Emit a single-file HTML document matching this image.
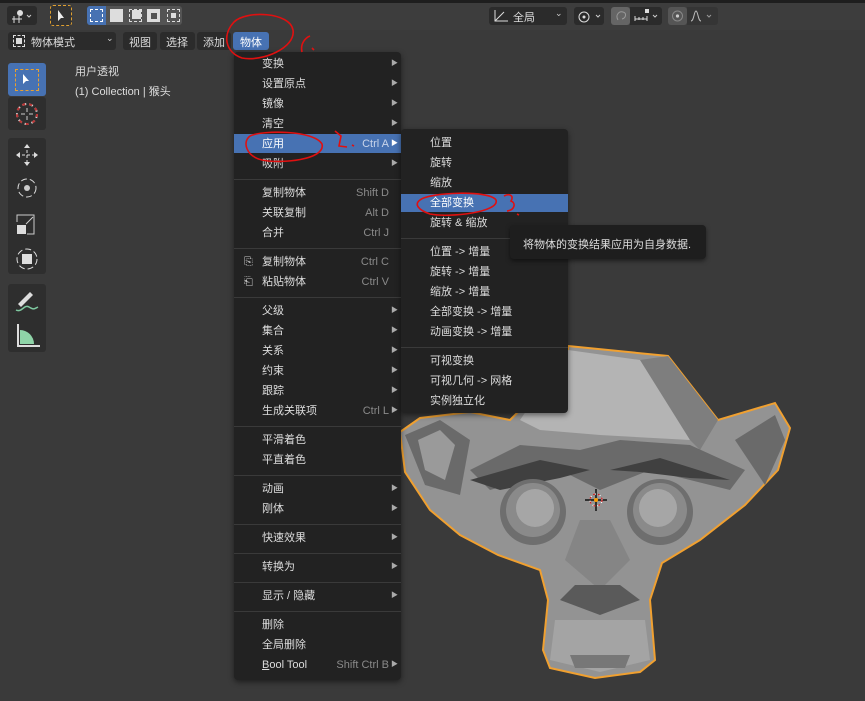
<!DOCTYPE html>
<html><head><meta charset="utf-8"><style>
*{margin:0;padding:0;box-sizing:border-box}
body{width:865px;height:701px;overflow:hidden;background:#3a3a3a;font-family:"Liberation Sans","Noto Sans CJK SC",sans-serif;font-size:11px;color:#dcdcdc;position:relative}
.abs{position:absolute}
.btn{position:absolute;background:#2b2b2b;border-radius:3px}
.menu{position:absolute;background:#222;border-radius:4px;box-shadow:0 2px 6px rgba(0,0,0,.5)}
.it{position:absolute;left:0;right:0;height:20px;line-height:20px}
.it .t{position:absolute}
.it .s{position:absolute;color:#8a8a8a}
.it .a{position:absolute;font-size:7px;color:#aaa}
.hl{background:#4772b3;color:#fff}
.sep{position:absolute;left:0;right:0;height:1px;background:#3a3a3a}
.tb{position:absolute;left:8px;width:38px;background:#2e2e2e;border-radius:3px}
</style></head><body>
<div class="abs" style="left:0;top:0;width:865px;height:3px;background:#1e1e1e"></div>
<div class="abs" style="left:0;top:3px;width:865px;height:27px;background:#3d3d3d"></div>
<div class="btn" style="left:7px;top:6px;width:30px;height:19px"></div>
<svg class="abs" style="left:10px;top:8px" width="26" height="16"><path d="M2 11h10M4 8v7M9 8v7" stroke="#ddd" fill="none"/><circle cx="10" cy="5" r="3" fill="#ddd"/><path d="M17 7l2 2 2-2" stroke="#ccc" fill="none"/></svg>
<div class="btn" style="left:50px;top:5px;width:22px;height:21px;border:1px dashed #e0a030;background:#333"></div>
<svg class="abs" style="left:56px;top:9px" width="12" height="14"><path d="M2 1v11l3-3 3 0z" fill="#eee"/></svg>
<div class="btn" style="left:87px;top:6px;width:95px;height:19px;background:#545454"></div>
<div class="abs" style="left:87px;top:6px;width:19px;height:19px;background:#4772b3;border-radius:3px 0 0 3px"></div>
<div class="abs" style="left:90px;top:9px;width:13px;height:13px;border:1px dashed #fff"></div>
<div class="abs" style="left:110px;top:9px;width:13px;height:13px;background:#ddd"></div>
<div class="abs" style="left:129px;top:9px;width:13px;height:13px;border:1px dashed #ddd;background:linear-gradient(#ddd,#ddd) 2px 0/9px 9px no-repeat"></div>
<div class="abs" style="left:147px;top:9px;width:13px;height:13px;background:#ddd"></div>
<div class="abs" style="left:151px;top:13px;width:6px;height:6px;background:#545454"></div>
<div class="abs" style="left:167px;top:9px;width:13px;height:13px;border:1px dashed #ddd"></div>
<div class="abs" style="left:171px;top:13px;width:5px;height:5px;background:#ddd"></div>

<div class="btn" style="left:489px;top:7px;width:78px;height:18px"></div>
<svg class="abs" style="left:492px;top:8px" width="20" height="16"><path d="M3 2v11h13M3 13l9-9" stroke="#ddd" fill="none"/></svg>
<div class="abs" style="left:513px;top:9px;color:#ddd">全局</div>
<div class="abs" style="left:555px;top:8px;color:#ccc;font-size:9px">⌄</div>
<div class="btn" style="left:574px;top:7px;width:30px;height:18px"></div>
<svg class="abs" style="left:576px;top:8px" width="28" height="16"><circle cx="8" cy="9" r="5" stroke="#ddd" fill="none"/><circle cx="8" cy="9" r="1.5" fill="#ddd"/><path d="M20 7l2 2 2-2" stroke="#ccc" fill="none"/></svg>
<div class="btn" style="left:611px;top:7px;width:19px;height:18px;background:#656565"></div>
<div class="btn" style="left:630px;top:7px;width:32px;height:18px;border-radius:0 3px 3px 0"></div>
<svg class="abs" style="left:613px;top:8px" width="48" height="16"><path d="M5 12c-3-5 1-9 5-8s3 6-1 7" stroke="#999" fill="none"/><path d="M22 11h12M22 8v5M26 9v3M30 9v3M34 8v5" stroke="#ddd" fill="none"/><rect x="32" y="1" width="4" height="4" fill="#ddd"/><path d="M40 7l2 2 2-2" stroke="#ccc" fill="none"/></svg>
<div class="btn" style="left:668px;top:7px;width:19px;height:18px;background:#555"></div>
<div class="btn" style="left:687px;top:7px;width:31px;height:18px;border-radius:0 3px 3px 0;background:#353535"></div>
<svg class="abs" style="left:669px;top:8px" width="48" height="16"><circle cx="8.5" cy="8" r="5" stroke="#888" fill="none"/><circle cx="8.5" cy="8" r="1.6" fill="#ccc"/><path d="M22 13c3 0 3-10 5-10s2 10 5 10" stroke="#bbb" fill="none"/><path d="M38 7l2 2 2-2" stroke="#999" fill="none"/></svg>

<div class="btn" style="left:8px;top:32px;width:108px;height:18px"></div>
<div class="abs" style="left:13px;top:35px;width:12px;height:12px;border:1px dashed #ddd"></div>
<div class="abs" style="left:16px;top:38px;width:6px;height:6px;background:#ddd"></div>
<div class="abs" style="left:31px;top:34px;color:#ddd">物体模式</div>
<div class="abs" style="left:106px;top:33px;color:#ccc;font-size:9px">⌄</div>
<div class="btn" style="left:123px;top:32px;width:34px;height:18px"></div><div class="abs" style="left:129px;top:34px">视图</div>
<div class="btn" style="left:160px;top:32px;width:35px;height:18px"></div><div class="abs" style="left:166px;top:34px">选择</div>
<div class="btn" style="left:197px;top:32px;width:34px;height:18px"></div><div class="abs" style="left:203px;top:34px">添加</div>
<div class="btn" style="left:233px;top:32px;width:36px;height:18px;background:#4772b3"></div><div class="abs" style="left:240px;top:34px;color:#fff">物体</div>

<div class="abs" style="left:75px;top:63px">用户透视</div>
<div class="abs" style="left:75px;top:83px">(1) Collection | 猴头</div>

<div class="tb" style="top:63px;height:33px;background:#4772b3"></div>
<div class="abs" style="left:15px;top:69px;width:24px;height:22px;border:1px dashed #e8a030"></div>
<svg class="abs" style="left:21px;top:73px" width="12" height="14"><path d="M2 1v10l3-3 3 0z" fill="#fff"/></svg>
<div class="tb" style="top:97px;height:33px"></div>
<svg class="abs" style="left:13px;top:101px" width="28" height="26"><circle cx="14" cy="13" r="10" stroke="#ddd" stroke-width="2" stroke-dasharray="4 3" fill="none"/><circle cx="14" cy="13" r="10" stroke="#b33" stroke-width="2" stroke-dasharray="3 4" fill="none"/><path d="M14 7v4M14 15v4M8 13h4M16 13h4" stroke="#ccc"/></svg>
<div class="tb" style="top:138px;height:136px"></div>
<svg class="abs" style="left:12px;top:142px" width="30" height="128"><path d="M15 3v20M5 13h20" stroke="#ddd" stroke-dasharray="3 2"/><path d="M15 2l-3 4h6zM15 24l-3-4h6zM4 13l4-3v6zM26 13l-4-3v6z" fill="#ddd"/><circle cx="15" cy="46" r="9" stroke="#ddd" fill="none" stroke-dasharray="6 3"/><circle cx="15" cy="46" r="3" fill="#ccc"/><rect x="5" y="83" width="9" height="9" fill="#ddd"/><path d="M5 80v-7h17v19h-7M14 82l7-7" stroke="#ccc" fill="none"/><circle cx="15" cy="117" r="10" stroke="#ddd" fill="none" stroke-dasharray="6 3"/><rect x="10" y="112" width="10" height="10" fill="#ddd"/></svg>
<div class="tb" style="top:284px;height:68px"></div>
<svg class="abs" style="left:12px;top:288px" width="30" height="62"><path d="M6 16l12-12 3 3-12 12z" fill="#ddd"/><path d="M4 22c6 3 8-6 13-3s5 2 9 0" stroke="#7ec8a0" fill="none" stroke-width="1.5"/><path d="M6 36v22h22" stroke="#ddd" fill="none" stroke-width="2"/><path d="M8 56v-14a14 14 0 0 1 14 14z" fill="#8fd4a8"/></svg>

<svg class="abs" style="left:0;top:0" width="865" height="701">
<path d="M568 346L668 356L718 420L775 403L790 428L778 470L745 505L700 540L662 563L650 600L655 660L640 672L595 678L550 668L543 650L548 600L540 570L498 555L460 535L430 510L405 472L400 432L420 418L470 412L510 420L540 390L568 380Z" fill="#939393" stroke="#f0a030" stroke-width="2"/>
<path d="M568 350L640 360L680 400L690 440L600 435L540 430L520 420Z" fill="#b4b4b4"/>
<path d="M640 360L668 356L718 420L700 450L690 440Z" fill="#7e7e7e"/>
<path d="M470 470L520 445L580 450L620 440L690 445L745 470L730 490L650 470L600 490L560 470L490 490Z" fill="#6a6a6a"/>
<path d="M470 480L540 460L590 470L560 478L500 490Z" fill="#404040"/>
<path d="M610 470L660 458L730 480L690 478L640 472Z" fill="#404040"/>
<path d="M405 435L440 420L470 440L460 495L425 485Z" fill="#6a6a6a"/>
<path d="M418 440L440 430L455 445L445 480L425 470Z" fill="#9a9a9a"/>
<path d="M735 440L775 415L785 440L765 485Z" fill="#6a6a6a"/>
<circle cx="533" cy="512" r="33" fill="#6e6e6e"/><circle cx="533" cy="510" r="27" fill="#8a8a8a"/><circle cx="535" cy="508" r="19" fill="#a6a6a6"/>
<circle cx="660" cy="512" r="33" fill="#6e6e6e"/><circle cx="660" cy="510" r="27" fill="#8a8a8a"/><circle cx="658" cy="508" r="19" fill="#a6a6a6"/>
<path d="M580 520L610 520L630 560L600 590L565 560Z" fill="#858585"/>
<path d="M575 585L620 585L640 600L600 615L560 600Z" fill="#5a5a5a"/>
<path d="M555 620L645 620L650 660L600 672L550 660Z" fill="#a4a4a4"/>
<path d="M570 655L630 655L625 668L575 668Z" fill="#777"/>
<path d="M585 500h22M596 489v22" stroke="#111" stroke-width="1.5"/>
<circle cx="596" cy="500" r="6" stroke="#fff" stroke-dasharray="3 2" fill="none" stroke-width="1.3"/>
<circle cx="596" cy="500" r="6" stroke="#c22" stroke-dasharray="2 3" fill="none" stroke-width="1.3"/>
<circle cx="596" cy="500" r="2" fill="#f90"/>
</svg>

<div class="menu" style="left:234px;top:52px;width:167px;height:628px">
<div class="it" style="top:2px"><span class="t" style="left:28px">变换</span><span class="a" style="left:157px">▶</span></div>
<div class="it" style="top:22px"><span class="t" style="left:28px">设置原点</span><span class="a" style="left:157px">▶</span></div>
<div class="it" style="top:42px"><span class="t" style="left:28px">镜像</span><span class="a" style="left:157px">▶</span></div>
<div class="it" style="top:62px"><span class="t" style="left:28px">清空</span><span class="a" style="left:157px">▶</span></div>
<div class="it hl" style="top:82px;height:19px"><span class="t" style="left:28px">应用</span><span class="s" style="right:12px;color:#c8d4ea">Ctrl A</span><span class="a" style="left:157px;color:#fff">▶</span></div>
<div class="it" style="top:102px"><span class="t" style="left:28px">吸附</span><span class="a" style="left:157px">▶</span></div>
<div class="sep" style="top:127px"></div>
<div class="it" style="top:131px"><span class="t" style="left:28px">复制物体</span><span class="s" style="right:12px">Shift D</span></div>
<div class="it" style="top:151px"><span class="t" style="left:28px">关联复制</span><span class="s" style="right:12px">Alt D</span></div>
<div class="it" style="top:171px"><span class="t" style="left:28px">合并</span><span class="s" style="right:12px">Ctrl J</span></div>
<div class="sep" style="top:196px"></div>
<div class="it" style="top:200px"><span class="t" style="left:10px;color:#ccc">⎘</span><span class="t" style="left:28px">复制物体</span><span class="s" style="right:12px">Ctrl C</span></div>
<div class="it" style="top:220px"><span class="t" style="left:10px;color:#ccc">⎗</span><span class="t" style="left:28px">粘贴物体</span><span class="s" style="right:12px">Ctrl V</span></div>
<div class="sep" style="top:245px"></div>
<div class="it" style="top:249px"><span class="t" style="left:28px">父级</span><span class="a" style="left:157px">▶</span></div>
<div class="it" style="top:269px"><span class="t" style="left:28px">集合</span><span class="a" style="left:157px">▶</span></div>
<div class="it" style="top:289px"><span class="t" style="left:28px">关系</span><span class="a" style="left:157px">▶</span></div>
<div class="it" style="top:309px"><span class="t" style="left:28px">约束</span><span class="a" style="left:157px">▶</span></div>
<div class="it" style="top:329px"><span class="t" style="left:28px">跟踪</span><span class="a" style="left:157px">▶</span></div>
<div class="it" style="top:349px"><span class="t" style="left:28px">生成关联项</span><span class="s" style="right:12px">Ctrl L</span><span class="a" style="left:157px">▶</span></div>
<div class="sep" style="top:374px"></div>
<div class="it" style="top:378px"><span class="t" style="left:28px">平滑着色</span></div>
<div class="it" style="top:398px"><span class="t" style="left:28px">平直着色</span></div>
<div class="sep" style="top:423px"></div>
<div class="it" style="top:427px"><span class="t" style="left:28px">动画</span><span class="a" style="left:157px">▶</span></div>
<div class="it" style="top:447px"><span class="t" style="left:28px">刚体</span><span class="a" style="left:157px">▶</span></div>
<div class="sep" style="top:472px"></div>
<div class="it" style="top:476px"><span class="t" style="left:28px">快速效果</span><span class="a" style="left:157px">▶</span></div>
<div class="sep" style="top:501px"></div>
<div class="it" style="top:505px"><span class="t" style="left:28px">转换为</span><span class="a" style="left:157px">▶</span></div>
<div class="sep" style="top:530px"></div>
<div class="it" style="top:534px"><span class="t" style="left:28px">显示 / 隐藏</span><span class="a" style="left:157px">▶</span></div>
<div class="sep" style="top:559px"></div>
<div class="it" style="top:563px"><span class="t" style="left:28px">删除</span></div>
<div class="it" style="top:583px"><span class="t" style="left:28px">全局删除</span></div>
<div class="it" style="top:603px"><span class="t" style="left:28px"><u>B</u>ool Tool</span><span class="s" style="right:12px">Shift Ctrl B</span><span class="a" style="left:157px">▶</span></div>
</div>

<div class="menu" style="left:401px;top:129px;width:167px;height:284px">
<div class="it" style="top:4px"><span class="t" style="left:29px">位置</span></div>
<div class="it" style="top:24px"><span class="t" style="left:29px">旋转</span></div>
<div class="it" style="top:44px"><span class="t" style="left:29px">缩放</span></div>
<div class="it hl" style="top:65px;height:18px;line-height:18px"><span class="t" style="left:29px">全部变换</span></div>
<div class="it" style="top:84px"><span class="t" style="left:29px">旋转 &amp; 缩放</span></div>
<div class="sep" style="top:109px"></div>
<div class="it" style="top:113px"><span class="t" style="left:29px">位置 -&gt; 增量</span></div>
<div class="it" style="top:133px"><span class="t" style="left:29px">旋转 -&gt; 增量</span></div>
<div class="it" style="top:153px"><span class="t" style="left:29px">缩放 -&gt; 增量</span></div>
<div class="it" style="top:173px"><span class="t" style="left:29px">全部变换 -&gt; 增量</span></div>
<div class="it" style="top:193px"><span class="t" style="left:29px">动画变换 -&gt; 增量</span></div>
<div class="sep" style="top:218px"></div>
<div class="it" style="top:222px"><span class="t" style="left:29px">可视变换</span></div>
<div class="it" style="top:242px"><span class="t" style="left:29px">可视几何 -&gt; 网格</span></div>
<div class="it" style="top:262px"><span class="t" style="left:29px">实例独立化</span></div>
</div>

<div class="abs" style="left:510px;top:225px;width:196px;height:34px;background:#1e1e1e;border-radius:4px;box-shadow:0 2px 5px rgba(0,0,0,.5)"></div>
<div class="abs" style="left:523px;top:236px;color:#ddd">将物体的变换结果应用为自身数据.</div>

<svg class="abs" style="left:0;top:0" width="865" height="701">
<g stroke="#e01010" stroke-width="1.6" fill="none">
<path d="M234 22C246 10 290 12 293 30C296 48 262 62 242 58C225 52 222 35 234 22"/>
<path d="M302 52C300 44 305 38 310 36M312 48l2 2"/>
<path d="M250 136C262 130 314 130 322 144C326 160 280 164 262 160C246 156 242 142 250 136"/>
<path d="M335 131l6 5-2 10 8 1M352 145l2 1"/>
<path d="M420 200C430 192 490 190 496 200C500 212 450 218 430 214C418 210 414 204 420 200"/>
<path d="M504 196c6-3 10 0 7 5 5 2 4 9-4 10M517 214l2 1"/>
</g></svg>
</body></html>
